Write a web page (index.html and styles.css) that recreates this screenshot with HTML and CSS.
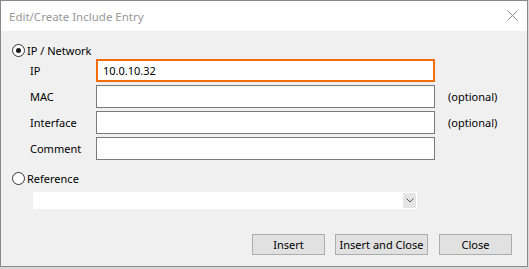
FILE: index.html
```html
<!DOCTYPE html>
<html>
<head>
<meta charset="utf-8">
<link rel="stylesheet" href="styles.css">
</head>
<body>
<div class="window">
  <div class="titlebar">
    <span class="title">Edit/Create Include Entry</span>
    <svg class="close" width="11" height="11" viewBox="0 0 11 11"><path d="M0.5 0.5L10.5 10.5M10.5 0.5L0.5 10.5" stroke="#8c8c8c" stroke-width="1" fill="none"/></svg>
  </div>
  <div class="content">
    <div class="radio-row">
      <span class="radio checked"></span><span class="radio-text">IP / Network</span>
    </div>
    <div class="fields">
      <span class="lbl">IP</span>
      <div class="input focused">10.0.10.32</div>
      <span class="opt"></span>
      <span class="lbl">MAC</span>
      <div class="input"></div>
      <span class="opt">(optional)</span>
      <span class="lbl">Interface</span>
      <div class="input"></div>
      <span class="opt">(optional)</span>
      <span class="lbl">Comment</span>
      <div class="input"></div>
      <span class="opt"></span>
    </div>
    <div class="radio-row ref">
      <span class="radio"></span><span class="radio-text">Reference</span>
    </div>
    <div class="combo">
      <div class="combo-btn">
        <svg width="8" height="5" viewBox="0 0 8 5"><path d="M0.5 0.5L4 4L7.5 0.5" stroke="#555" stroke-width="1" fill="none"/></svg>
      </div>
    </div>
    <div class="buttons">
      <div class="btn small">Insert</div>
      <div class="btn wide">Insert and Close</div>
      <div class="btn small">Close</div>
    </div>
  </div>
</div>
</body>
</html>
```

FILE: styles.css
```css
html, body {
  margin: 0;
  padding: 0;
}
body {
  width: 529px;
  height: 269px;
  background: #d8d8d8;
  font-family: "Noto Sans", "Open Sans", sans-serif;
  font-size: 11px;
  color: #000;
  overflow: hidden;
  white-space: nowrap;
}
.window {
  width: 526px;
  height: 265px;
  border: 1px solid #8a8a8a;
  background: #f0f0f0;
  display: flex;
  flex-direction: column;
}
.titlebar {
  height: 30px;
  background: #fff;
  display: flex;
  align-items: center;
  justify-content: space-between;
  padding: 0 9px 0 8px;
}
.title {
  color: #999;
  font-size: 11.5px;
}
.close {
  display: block;
  margin-top: -1px;
}
.content {
  flex: 1;
  display: flex;
  flex-direction: column;
  padding: 10px 15px 0 11px;
}
.radio-row {
  height: 18px;
  display: flex;
  align-items: center;
  gap: 2px;
}
.radio {
  width: 11px;
  height: 11px;
  border: 1px solid #333;
  border-radius: 50%;
  background: #fff;
  position: relative;
  box-sizing: content-box;
}
.radio.checked::after {
  content: "";
  position: absolute;
  left: 3px;
  top: 3px;
  width: 5px;
  height: 5px;
  border-radius: 50%;
  background: #1a1a1a;
}
.fields {
  margin-top: 0;
  padding-left: 18px;
  display: grid;
  grid-template-columns: 53px 339px auto;
  column-gap: 13px;
  row-gap: 3px;
  align-items: center;
}
.lbl {
  line-height: 23px;
}
.input {
  box-sizing: border-box;
  height: 23px;
  border: 1px solid #7a7a7a;
  background: #fff;
  padding: 0 5px;
  line-height: 21px;
}
.input.focused {
  border: 2px solid #f26d10;
  line-height: 19px;
}
.opt {
  line-height: 23px;
}
.ref {
  margin-top: 9px;
}
.combo {
  margin-top: 5px;
  margin-left: 21px;
  width: 384px;
  height: 17px;
  background: #fff;
  display: flex;
  justify-content: flex-end;
  padding: 1px;
  box-sizing: border-box;
}
.combo-btn {
  width: 13px;
  background: #e5e5e5;
  display: flex;
  align-items: center;
  justify-content: center;
}
.combo-btn svg {
  display: block;
}
.buttons {
  margin-top: 25px;
  display: flex;
  justify-content: flex-end;
  gap: 10px;
}
.btn {
  box-sizing: border-box;
  height: 21px;
  background: #e1e1e1;
  border: 1px solid #adadad;
  display: flex;
  align-items: center;
  justify-content: center;
}
.btn.small {
  width: 73px;
}
.btn.wide {
  width: 93px;
}
.buttons .btn:nth-child(2) {
  margin-right: 1px;
}
```
